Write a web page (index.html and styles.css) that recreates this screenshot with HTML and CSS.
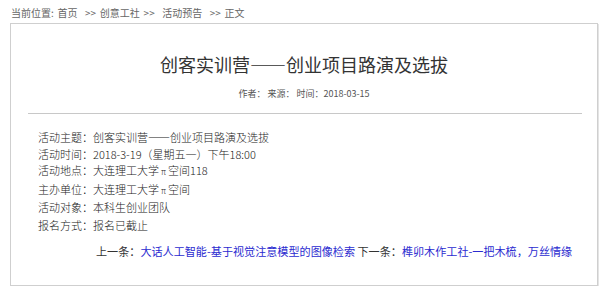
FILE: index.html
```html
<!DOCTYPE html>
<html lang="zh-CN">
<head>
<meta charset="utf-8">
<title>创客实训营——创业项目路演及选拔</title>
<link rel="stylesheet" href="styles.css">
</head>
<body>
<div class="crumb">当前位置: 首页 &nbsp;&gt;&gt; 创意工社 &gt;&gt; &nbsp;活动预告 &nbsp;&gt;&gt; 正文</div>
<div class="box">
  <h1 class="title">创客实训营<span class="dash">——</span>创业项目路演及选拔</h1>
  <div class="meta">作者：&nbsp;来源：&nbsp;时间：2018-03-15</div>
  <div class="rule"></div>
  <div class="info">
    <p>活动主题：创客实训营——创业项目路演及选拔</p>
    <p>活动时间：2018-3-19（星期五一）下午18:00</p>
    <p>活动地点：大连理工大学<span class="pi">π</span>空间118</p>
    <p>主办单位：大连理工大学<span class="pi">π</span>空间</p>
    <p>活动对象：本科生创业团队</p>
    <p class="sign">报名方式：报名已截止</p>
  </div>
  <div class="nav">上一条：<a href="#">大话人工智能-基于视觉注意模型的图像检索</a> 下一条：<a href="#">榫卯木作工社-一把木梳，万丝情缘</a></div>
</div>
</body>
</html>
```
FILE: styles.css
```css
html, body {
  margin: 0;
  padding: 0;
  background: #fff;
}
body {
  font-family: "Noto Sans CJK SC", "Noto Sans", sans-serif;
  color: #333;
}
.crumb {
  padding: 6px 0 0 11px;
  height: 14px;
  line-height: 14px;
  font-size: 10px;
  word-spacing: 1.5px;
  color: #666;
  white-space: nowrap;
}
.box {
  margin: 3px 0 0 10px;
  width: 588px;
  height: 263px;
  box-sizing: border-box;
  border: 1px solid #cfcfcf;
  box-shadow: 1px 1px 0 #e4e4e4;
}
.title {
  margin: 0;
  padding-top: 26px;
  font-size: 18px;
  line-height: 28px;
  font-weight: normal;
  text-align: center;
  color: #333;
}
.dash {
  letter-spacing: -5px;
  padding-right: 5px;
}
.meta {
  margin-top: 9px;
  font-size: 9px;
  line-height: 14px;
  text-align: center;
  color: #555;
}
.rule {
  margin: 12px 15px 0 17px;
  height: 1px;
  background: #c8c8c8;
}
.info {
  margin-top: 15px;
  padding-left: 27px;
  font-size: 11px;
  font-weight: 300;
  line-height: 16.5px;
  color: #222;
}
.info p {
  margin: 0;
}
.info .sign {
  margin-top: 1.5px;
}
.pi {
  font-size: 8px;
  padding: 0 2px;
}
.nav {
  margin-top: 9px;
  padding-left: 85px;
  font-size: 11.1px;
  line-height: 16px;
  color: #333;
  white-space: nowrap;
}
.nav a {
  color: #2b2bd0;
  text-decoration: none;
}
```
